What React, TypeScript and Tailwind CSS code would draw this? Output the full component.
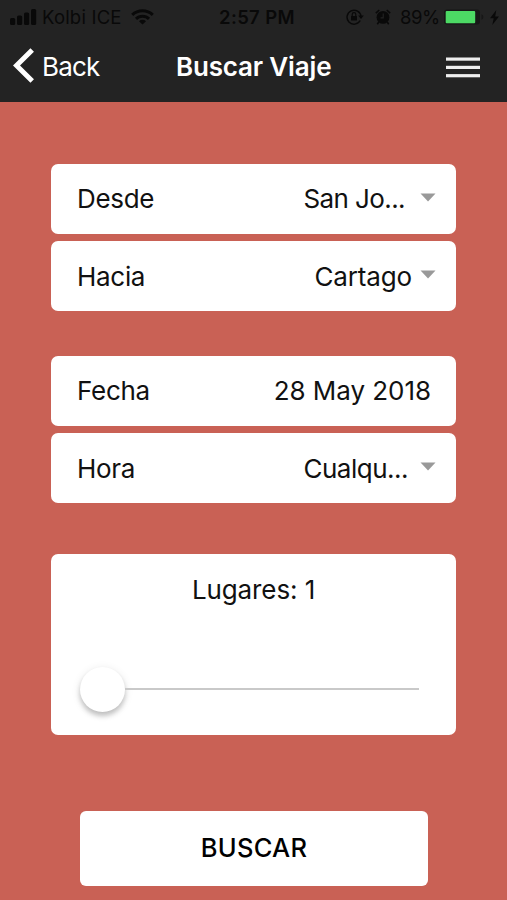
import type { ReactNode } from 'react';

function Caret() {
  return (
    <svg className="mb-1 h-[9px] w-4 shrink-0" viewBox="0 0 16 9" fill="#999999">
      <path d="M0.5 0.5h15L8 8.5z" />
    </svg>
  );
}

function Field({ label, caret, children }: { label: string; caret?: boolean; children: ReactNode }) {
  return (
    <div className={`flex h-[70px] items-center justify-between rounded-[7px] bg-white pl-[26px] pt-px ${caret ? 'pr-5' : 'pr-[25px]'}`}>
      <span className="tracking-[-0.3px]">{label}</span>
      <div className="flex items-center">
        {children}
        {caret && <Caret />}
      </div>
    </div>
  );
}

function StatusBar() {
  return (
    <div className="flex h-[34px] items-center text-[#090909]">
      <svg className="ml-[10px] h-4 w-[27px]" viewBox="0 0 27 16" fill="currentColor">
        <rect x="0" y="9" width="5.2" height="7" rx="1.6" />
        <rect x="7" y="6.5" width="5.2" height="9.5" rx="1.6" />
        <rect x="14" y="3.5" width="5.2" height="12.5" rx="1.6" />
        <rect x="21" y="0" width="5.2" height="16" rx="1.6" />
      </svg>
      <span className="ml-[5px] w-[79px] whitespace-nowrap text-[18.5px] tracking-[0.2px]">Kolbi ICE</span>
      <svg className="ml-[10px] h-4 w-[23px]" viewBox="0 0 23 16" fill="none" stroke="currentColor" strokeWidth="3">
        <path d="M1.2 5.8a14.8 14.8 0 0 1 20.6 0" />
        <path d="M5 9.9a9.2 9.2 0 0 1 13 0" />
        <path d="M11.5 15.6 8 12.2a5 5 0 0 1 7 0z" fill="currentColor" stroke="none" />
      </svg>
      <span className="ml-[65px] w-[76px] whitespace-nowrap text-[18.5px] font-semibold tracking-[0.35px]">2:57 PM</span>
      <svg className="ml-[51px] h-4 w-[18px]" viewBox="0 0 18 16" fill="none" stroke="currentColor" strokeWidth="1.5">
        <path d="M14.2 11.5A7 7 0 1 1 15 7.5" />
        <path d="M12.2 6.5h5.6L15 10z" fill="currentColor" stroke="none" />
        <rect x="5" y="7" width="6" height="4.6" rx="0.6" fill="currentColor" stroke="none" />
        <path d="M6.2 7.2V5.5a1.8 1.8 0 0 1 3.6 0v1.7" strokeWidth="1.2" />
      </svg>
      <svg className="ml-[11px] h-4 w-4" viewBox="0 0 16 16" fill="currentColor">
        <circle cx="8" cy="8.4" r="6.4" />
        <path d="M0.8 4.2 4.3 1M15.2 4.2 11.7 1M3.8 13l-1.5 2.2M12.2 13l1.5 2.2" stroke="currentColor" strokeWidth="1.6" />
        <path d="M8.2 4.5v4.4H5.6" fill="none" stroke="#232323" strokeWidth="1.1" />
      </svg>
      <span className="ml-[9px] w-[40px] whitespace-nowrap text-[18.5px] tracking-[-0.4px]">89%</span>
      <svg className="ml-[4px] h-4 w-[41px]" viewBox="0 0 41 16" fill="#171717">
        <rect x="0" y="0.5" width="36" height="15" rx="3" />
        <rect x="1.7" y="2" width="29.5" height="12.2" rx="1" fill="#4cd964" />
        <path d="M37.5 5.2a3 3 0 0 1 0 5.6z" />
      </svg>
      <svg className="ml-[5px] h-[15px] w-[9px]" viewBox="0 0 9 15" fill="currentColor">
        <path d="M6.3 0 0 8.3h3.7L2.3 15 9 6.4H5.2z" />
      </svg>
    </div>
  );
}

export default function App() {
  return (
    <div className="flex h-[900px] w-[507px] flex-col overflow-hidden bg-[#c96155] font-['Inter','Liberation_Sans',sans-serif] text-[26px] leading-none text-[#111111]">
      <header className="h-[102px] shrink-0 bg-[#232323]">
        <StatusBar />
        <nav className="flex h-[66px] items-center text-white">
          <svg className="ml-[13px] -mt-1 h-[35px] w-[22px]" viewBox="0 0 22 35" fill="none" stroke="currentColor" strokeWidth="5">
            <path d="M19.2 2 3.5 17.5 19.2 33" />
          </svg>
          <span className="ml-[7px] w-[60px] whitespace-nowrap tracking-[-0.8px]">Back</span>
          <h1 className="ml-[74px] w-[158px] whitespace-nowrap font-semibold tracking-[-0.17px]">Buscar Viaje</h1>
          <svg className="ml-[112px] h-[21px] w-[34px]" viewBox="0 0 34 21" fill="#eeeeee">
            <rect y="0.5" width="34" height="3.2" />
            <rect y="8.8" width="34" height="3.2" />
            <rect y="17.1" width="34" height="3.2" />
          </svg>
        </nav>
      </header>

      <main className="ml-[51px] flex w-[405px] flex-col pt-[61.5px]">
        <section className="flex flex-col gap-[7.5px]">
          <Field label="Desde" caret>
            <span className="mr-[15px] tracking-[-0.6px]">San Jo...</span>
          </Field>
          <Field label="Hacia" caret>
            <span className="mr-2 tracking-[-0.15px]">Cartago</span>
          </Field>
        </section>
        <section className="mt-[44.5px] flex flex-col gap-[7.5px]">
          <Field label="Fecha">
            <span className="tracking-[-0.05px]">28 May 2018</span>
          </Field>
          <Field label="Hora" caret>
            <span className="mr-[12px] tracking-[-0.5px]">Cualqu...</span>
          </Field>
        </section>
        <section className="mt-[51px] flex h-[180.5px] flex-col rounded-[7px] bg-white pt-[23px]">
          <p className="text-center tracking-[-0.1px]">Lugares: 1</p>
          <div className="ml-[28.5px] mt-[63px] flex h-[46px] items-center">
            <span className="size-[45px] rounded-full bg-white shadow-[0_4px_5px_rgba(0,0,0,0.2),0_2px_10px_rgba(0,0,0,0.1)]" />
            <span className="h-[2px] w-[294px] bg-[#c9c9c9]" />
          </div>
        </section>
        <button className="ml-[29px] mt-[76px] h-[75.5px] w-[348px] rounded-[6px] bg-white pb-0.5 text-[25.5px] font-medium tracking-[0.3px] text-black">
          BUSCAR
        </button>
      </main>
    </div>
  );
}
